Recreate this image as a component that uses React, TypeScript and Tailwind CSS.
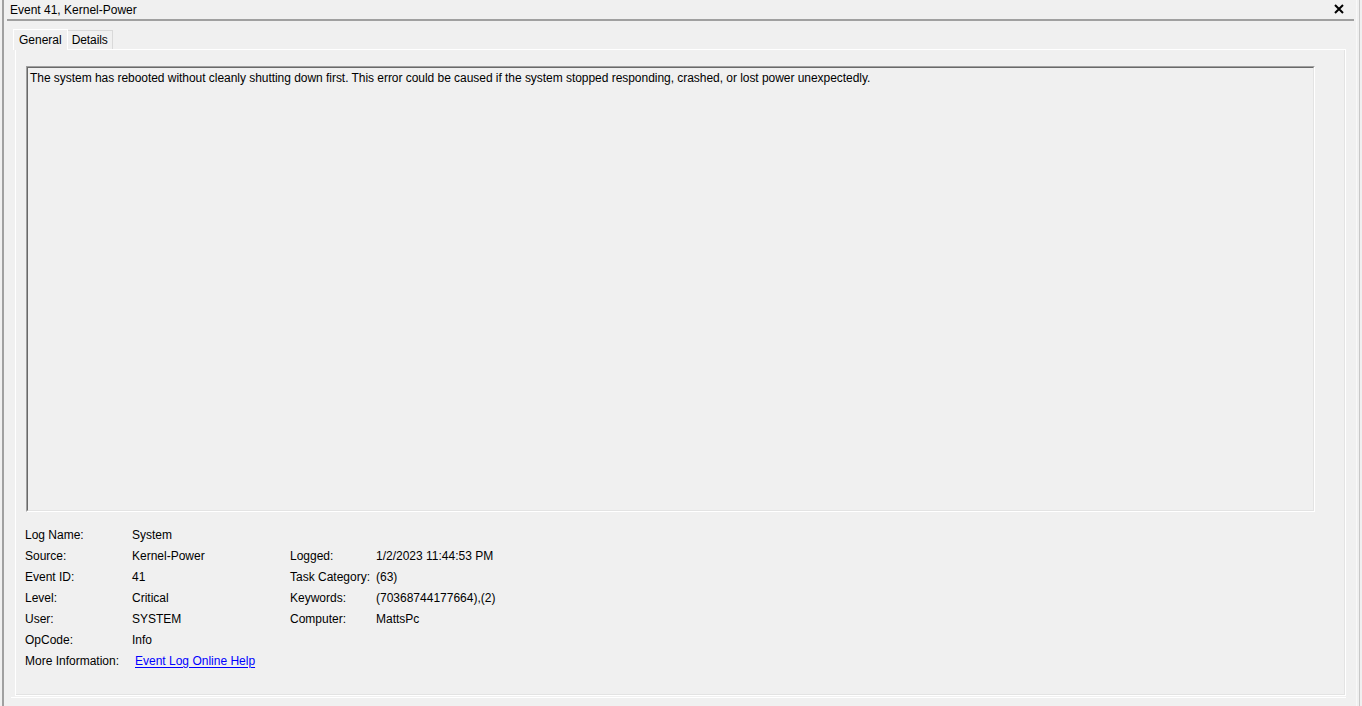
import React from 'react';

const rows: { label: string; value: React.ReactNode; label2?: string; value2?: string }[] = [
  { label: 'Log Name:', value: 'System' },
  { label: 'Source:', value: 'Kernel-Power', label2: 'Logged:', value2: '1/2/2023 11:44:53 PM' },
  { label: 'Event ID:', value: '41', label2: 'Task Category:', value2: '(63)' },
  { label: 'Level:', value: 'Critical', label2: 'Keywords:', value2: '(70368744177664),(2)' },
  { label: 'User:', value: 'SYSTEM', label2: 'Computer:', value2: 'MattsPc' },
  { label: 'OpCode:', value: 'Info' },
  {
    label: 'More Information:',
    value: (
      <a href="#" className="ml-[3px] text-[#0000ff] underline underline-offset-2">
        Event Log Online Help
      </a>
    ),
  },
];

const App: React.FC = () => {
  return (
    <div className="w-[1362px] h-[706px] bg-[#f0f0f0] flex text-[12px] text-black font-['Liberation_Sans',Arial,sans-serif] overflow-hidden">
      {/* left window edge */}
      <div className="w-[2px]" />
      <div className="w-[2px] bg-[#a0a0a0]" />

      <div className="w-[1352px] flex flex-col">
        {/* title */}
        <div className="h-[19px] flex items-center justify-between pl-[6px] pr-[12px]">
          <span className="leading-none">Event 41, Kernel-Power</span>
          <svg width="10" height="10" viewBox="0 0 10 10" className="mb-[1px]">
            <path d="M1 1 L9 9 M9 1 L1 9" stroke="#000" strokeWidth="2" />
          </svg>
        </div>
        <div className="h-[2px] bg-[#a0a0a0] ml-[3px] mr-[2px]" />

        {/* tabs */}
        <div className="ml-[9px] mr-[10px] mt-[7px] flex flex-col">
          <div className="flex items-end h-[21px]">
            <div className="h-[21px] px-[5px] pt-[2px] border border-b-0 border-white bg-[#f0f0f0] relative z-10 -mb-px leading-[16px]">
              General
            </div>
            <div className="h-[19px] px-[4px] pt-[2px] border border-b-0 border-l-0 border-[#d9d9d9] leading-[14px] tracking-[-0.1px]">
              Details
            </div>
          </div>

          <div className="h-[647px] ml-[2px] border border-white flex flex-col">
            <div className="flex-1 border-r border-b border-[#e3e3e3] flex flex-col pl-[10px] pr-[29px] pt-[16px]">
              {/* description box */}
              <div className="h-[446px] border-t border-l border-[#a0a0a0] border-r border-b border-r-white border-b-white">
                <div className="h-full border-t border-l border-[#696969] border-r border-b border-r-[#e3e3e3] border-b-[#e3e3e3] px-[2px] pt-[2px] leading-[16px] tracking-[-0.04px]">
                  The system has rebooted without cleanly shutting down first. This error could be caused if the system stopped responding, crashed, or lost power unexpectedly.
                </div>
              </div>

              {/* properties */}
              <div className="mt-[12px] -ml-[1px] flex flex-col">
                {rows.map((r) => (
                  <div key={r.label} className="h-[21px] flex items-center">
                    <div className="w-[107px]">{r.label}</div>
                    <div className="w-[158px]">{r.value}</div>
                    {r.label2 && <div className="w-[86px]">{r.label2}</div>}
                    {r.value2 && <div>{r.value2}</div>}
                  </div>
                ))}
              </div>
            </div>
          </div>
          <div className="h-[1px] mt-[1px] bg-white -ml-[2px]" />
        </div>
      </div>

      {/* right window edge */}
      <div className="w-[1px] bg-[#f8f8f8]" />
      <div className="w-[2px]" />
      <div className="w-[1px] bg-[#c8c8c8]" />
      <div className="w-[2px]" />
    </div>
  );
};

export default App;
